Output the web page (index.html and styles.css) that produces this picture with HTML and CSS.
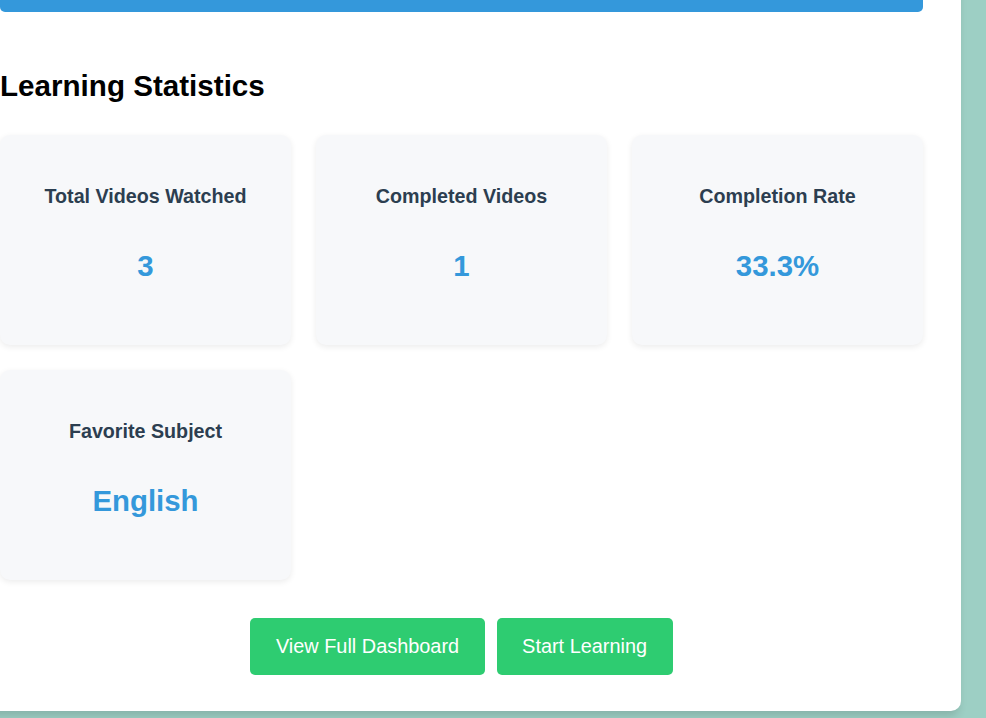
FILE: index.html
```html
<!DOCTYPE html>
<html lang="en">
<head>
<meta charset="utf-8">
<title>Learning Statistics</title>
<link rel="stylesheet" href="styles.css">
</head>
<body>
<div class="panel">
  <div class="top-bar"></div>
  <h2 class="section-title">Learning Statistics</h2>
  <div class="stats-grid">
    <div class="stat-card">
      <h3 class="stat-label">Total Videos Watched</h3>
      <p class="stat-value">3</p>
    </div>
    <div class="stat-card">
      <h3 class="stat-label">Completed Videos</h3>
      <p class="stat-value">1</p>
    </div>
    <div class="stat-card">
      <h3 class="stat-label">Completion Rate</h3>
      <p class="stat-value">33.3%</p>
    </div>
    <div class="stat-card">
      <h3 class="stat-label">Favorite Subject</h3>
      <p class="stat-value">English</p>
    </div>
  </div>
  <div class="actions">
    <a class="btn" href="#">View Full Dashboard</a>
    <a class="btn" href="#">Start Learning</a>
  </div>
</div>
</body>
</html>
```
FILE: styles.css
```css
html, body {
  margin: 0;
  padding: 0;
}
body {
  background: #9dcfc4;
  font-family: "Liberation Sans", Arial, sans-serif;
  height: 718px;
  overflow: hidden;
}
.panel {
  width: 923px;
  margin-left: -40px;
  margin-top: -28px;
  padding: 0 38px 36px 40px;
  background: #ffffff;
  border-radius: 0 0 10px 10px;
  box-shadow: 0 8px 10px -3px rgba(0, 0, 0, 0.14);
}
.top-bar {
  height: 40px;
  background: #3498db;
  border-radius: 0 0 5px 5px;
}
.section-title {
  margin: 56px 0 31px;
  font-size: 29.6px;
  line-height: 1.2;
  font-weight: bold;
  color: #000;
}
.stats-grid {
  display: grid;
  grid-template-columns: repeat(3, 1fr);
  gap: 25px;
}
.stat-card {
  height: 210px;
  box-sizing: border-box;
  padding-top: 50px;
  background: #f7f8fa;
  border-radius: 10px;
  box-shadow: 0 2px 6px rgba(0, 0, 0, 0.08);
  text-align: center;
}
.stat-label {
  margin: 0 0 40px;
  font-size: 19.7px;
  line-height: 23.5px;
  font-weight: bold;
  color: #2c3e50;
}
.stat-value {
  margin: 0;
  font-size: 29.4px;
  line-height: 35px;
  font-weight: bold;
  color: #3498db;
}
.actions {
  margin-top: 38px;
  display: flex;
  justify-content: center;
  gap: 12px;
}
.btn {
  display: block;
  padding: 17px 25.5px;
  font-size: 19.9px;
  line-height: 23px;
  color: #ffffff;
  background: #2ecc71;
  border-radius: 5px;
  text-decoration: none;
}
```
